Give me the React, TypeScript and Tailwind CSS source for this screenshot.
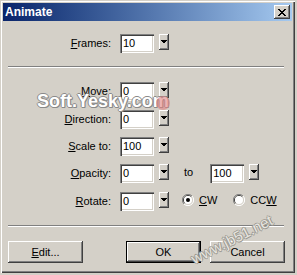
import React from "react";

const FONT = { fontFamily: '"Liberation Sans", Arial, sans-serif' };

const RAISED =
  "shadow-[inset_-1px_-1px_0_#404040,inset_1px_1px_0_#ffffff,inset_-2px_-2px_0_#808080,inset_2px_2px_0_#d4d0c8]";
const SUNKEN =
  "shadow-[inset_1px_1px_0_#808080,inset_2px_2px_0_#404040,inset_-1px_-1px_0_#ffffff,inset_-2px_-2px_0_#d4d0c8]";

function Arrow() {
  return (
    <svg width="10" height="16" viewBox="0 0 10 16" className="block">
      <path d="M2 6h6v1H2zM3 7h4v1H3zM4 8h2v1H4z" fill="#000" />
    </svg>
  );
}

function Field({ value }: { value: string }) {
  return (
    <div className="flex items-start gap-[5px]">
      <div className={`flex h-[19px] w-[34px] items-center bg-white pl-[3px] text-[11px] ${SUNKEN}`}>{value}</div>
      <div className={`h-[16px] w-[10px] bg-[#d4d0c8] ${RAISED}`}>
        <Arrow />
      </div>
    </div>
  );
}

function Row({ hot, rest, children, top }: { hot: string; rest: string; children: React.ReactNode; top: string }) {
  return (
    <div className={`flex h-[19px] items-center ${top}`}>
      <div className="w-[108px] text-right text-[11px] leading-none">
        <u>{hot}</u>
        {rest}
      </div>
      <div className="ml-[9px] flex items-start">{children}</div>
    </div>
  );
}

function Separator({ top }: { top: string }) {
  return (
    <div className={`${top} mx-[5px] w-[276px]`}>
      <div className="h-px bg-[#808080]" />
      <div className="h-px bg-white" />
    </div>
  );
}

function Radio({ checked }: { checked?: boolean }) {
  return (
    <svg width="12" height="12" viewBox="0 0 12 12" className="block">
      <path d="M10 2A5.5 5.5 0 0 0 2 10" stroke="#808080" fill="none" />
      <path d="M9.2 2.8A4.3 4.3 0 0 0 2.8 9.2" stroke="#404040" fill="none" />
      <circle cx="6" cy="6" r="4" fill="#fff" />
      <path d="M2 10A5.5 5.5 0 0 0 10 2" stroke="#fff" fill="none" />
      {checked && <circle cx="6" cy="6" r="2" fill="#000" />}
    </svg>
  );
}

function Button({ children, isDefault, className }: { children: React.ReactNode; isDefault?: boolean; className?: string }) {
  return (
    <div
      className={`flex h-[22px] w-[75px] items-center justify-center bg-[#d4d0c8] text-[11px] ${
        isDefault ? "border border-black" : ""
      } ${className ?? ""}`}
    >
      <div className={`flex h-full w-full items-center justify-center ${RAISED}`}>{children}</div>
    </div>
  );
}

export default function App() {
  return (
    <div className="relative h-[275px] w-[297px] overflow-hidden bg-[#d4d0c8] text-black" style={FONT}>
      <div className="h-[273px] w-[295px] p-[3px] shadow-[inset_1px_1px_0_#d4d0c8,inset_2px_2px_0_#ffffff,inset_-1px_-1px_0_#404040,inset_-2px_-2px_0_#808080]">
        {/* title bar */}
        <div className="flex h-[18px] items-center justify-between bg-gradient-to-r from-[#0a246a] to-[#a6caf0] pl-[2px] pr-[2px]">
          <span className="text-[12px] font-bold text-white">Animate</span>
          <div className={`flex h-[14px] w-[16px] items-center justify-center bg-[#d4d0c8] ${RAISED}`}>
            <svg width="8" height="7" viewBox="0 0 8 7">
              <path d="M0 0L7 7M1 0L8 7M7 0L0 7M8 0L1 7" stroke="#000" strokeWidth="1" />
            </svg>
          </div>
        </div>

        <div className="mt-[12px] flex h-[20px] items-center">
          <div className="w-[108px] text-right text-[11px] leading-none">
            <u>F</u>rames:
          </div>
          <div className="ml-[9px]">
            <Field value="10" />
          </div>
        </div>

        <Separator top="mt-[13px]" />

        <Row hot="M" rest="ove:" top="mt-[14px]">
          <Field value="0" />
        </Row>
        <Row hot="D" rest="irection:" top="mt-[9px]">
          <Field value="0" />
        </Row>
        <Row hot="S" rest="cale to:" top="mt-[8px]">
          <Field value="100" />
        </Row>
        <Row hot="O" rest="pacity:" top="mt-[8px]">
          <Field value="0" />
          <span className="ml-[15px] mr-[17px] text-[11px]">to</span>
          <Field value="100" />
        </Row>
        <Row hot="R" rest="otate:" top="mt-[9px]">
          <Field value="0" />
          <div className="ml-[13px] flex items-center gap-[5px] text-[11px]">
            <Radio checked />
            <span>
              <u>C</u>W
            </span>
          </div>
          <div className="ml-[16px] flex items-center gap-[5px] text-[11px]">
            <Radio />
            <span>
              CC<u>W</u>
            </span>
          </div>
        </Row>

        <Separator top="mt-[14px]" />

        <div className="mt-[14px] flex px-[5px]">
          <Button>
            <span>
              <u>E</u>dit...
            </span>
          </Button>
          <Button isDefault className="ml-[43px]">
            OK
          </Button>
          <Button className="ml-[9px]">Cancel</Button>
        </div>
      </div>

      {/* watermarks */}
      <div
        className="absolute left-[37px] top-[92px] text-[18px] font-bold leading-none text-white"
        style={{ textShadow: "1px 0 #8a8a8a, -1px 0 #8a8a8a, 0 1px #8a8a8a, 0 -1px #8a8a8a, 1px 1px #8a8a8a" }}
      >
        Soft.Yesky.com
      </div>
      <div className="absolute left-[156px] top-[96px] h-[14px] w-[14px] rounded-full bg-[#e08080] opacity-60" />
      <div
        className="absolute left-[192px] top-[252px] origin-left -rotate-[27deg] text-[15px] leading-none text-[#e8e6e0]"
        style={{ textShadow: "1px 0 #9a9890, -1px 0 #9a9890, 0 1px #9a9890, 0 -1px #9a9890" }}
      >
        www.jb51.net
      </div>
    </div>
  );
}
